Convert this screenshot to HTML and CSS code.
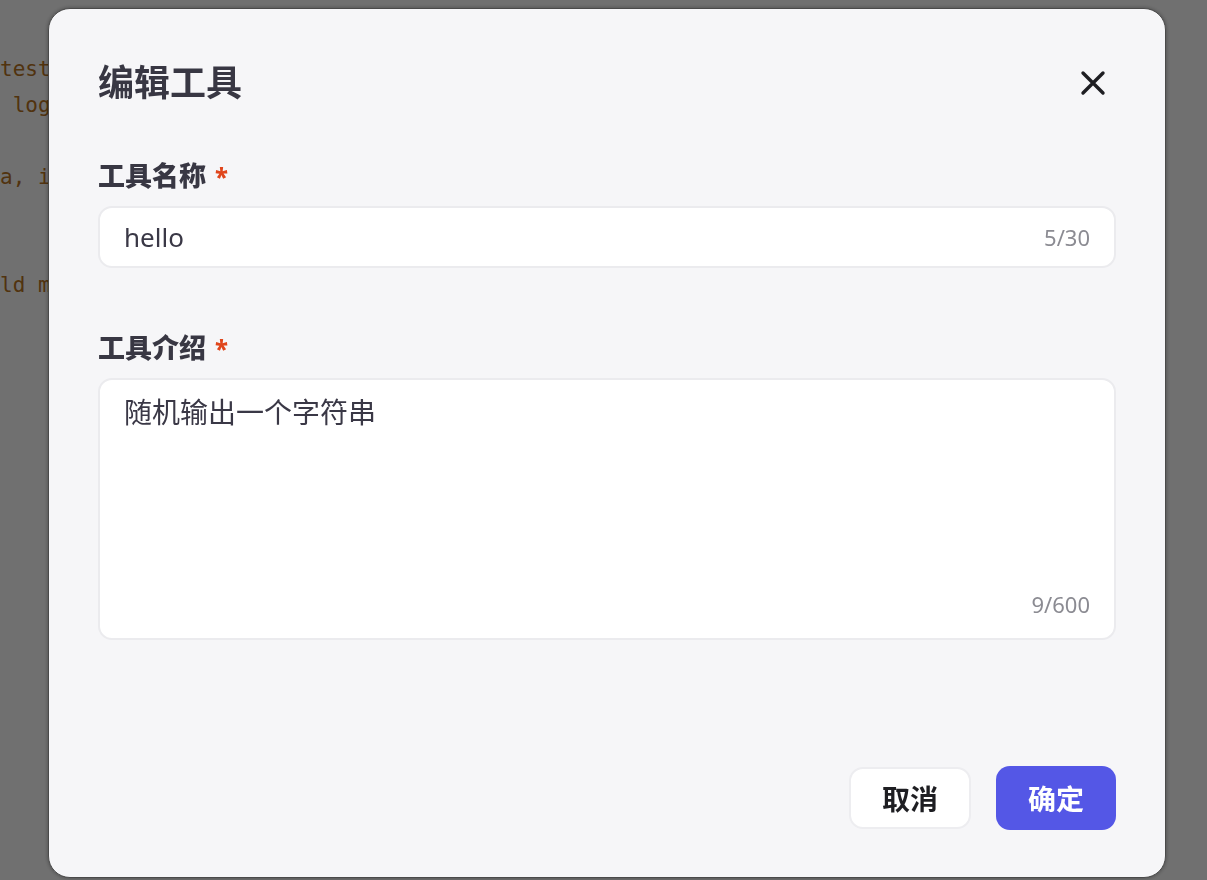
FILE: index.html
```html
<!DOCTYPE html>
<html>

<head>
    <title>编辑工具</title>
    <link rel="stylesheet" href="styles.css">
</head>

<body>
    <pre class="code">
test_tool = Tool()
 logger.info("start")

a, idx = 0, 1


ld message = build()
</pre>

    <div class="overlay">
        <div class="modal">
            <div class="modal-head">
                <h2 class="modal-title">编辑工具</h2>
                <button class="close-btn" aria-label="close">
                    <svg width="26" height="26" viewBox="0 0 26 26">
                        <path d="M3 3 L23 23 M23 3 L3 23" stroke="#1e1e22" stroke-width="3.4" stroke-linecap="round" fill="none" />
                    </svg>
                </button>
            </div>

            <div class="field">
                <label class="field-label">工具名称 <span class="req">*</span></label>
                <div class="input-box">
                    <span class="input-text">hello</span>
                    <span class="count">5/30</span>
                </div>
            </div>

            <div class="field field-2">
                <label class="field-label">工具介绍 <span class="req">*</span></label>
                <div class="textarea-box">
                    <span class="input-text input-cjk">随机输出一个字符串</span>
                    <span class="count">9/600</span>
                </div>
            </div>

            <div class="modal-foot">
                <button class="btn btn-cancel">取消</button>
                <button class="btn btn-ok">确定</button>
            </div>
        </div>
    </div>
</body>

</html>
```

FILE: styles.css
```css
html, body {
    margin: 0;
    padding: 0;
    background: #ffffff;
    height: 100%;
    overflow: hidden;
}

.code {
    margin: 0;
    padding-top: 51px;
    font-family: "DejaVu Sans Mono", "Liberation Mono", monospace;
    font-size: 21px;
    line-height: 36px;
    color: #b87424;
}

.overlay {
    position: fixed;
    inset: 0;
    background: rgba(0, 0, 0, 0.56);
}

.modal {
    position: absolute;
    left: 48px;
    top: 8px;
    width: 1118px;
    height: 870px;
    box-sizing: border-box;
    padding: 50px 49px 0 49px;
    background: #f6f6f8;
    border: 1px solid #4a4a4a;
    border-radius: 22px;
    box-shadow: 0 0 4px rgba(0, 0, 0, 0.35);
    font-family: "Noto Sans", "Noto Sans CJK SC", sans-serif;
    color: #383743;
    display: flex;
    flex-direction: column;
}

.modal-head {
    display: flex;
    justify-content: space-between;
    align-items: center;
    height: 48px;
}

.modal-title {
    margin: 0;
    font-size: 36px;
    line-height: 48px;
    font-weight: 700;
}

.close-btn {
    border: none;
    background: none;
    padding: 0;
    margin-right: 10px;
    width: 26px;
    height: 26px;
    cursor: pointer;
}

.field {
    margin-top: 49px;
}

.field-2 {
    margin-top: 60px;
}

.field-label {
    display: block;
    font-size: 27px;
    line-height: 40px;
    font-weight: 800;
    margin-bottom: 9px;
}

.req {
    color: #e0461c;
    font-size: 24px;
    margin-left: 2px;
}

.input-box,
.textarea-box {
    background: #ffffff;
    border: 2px solid #ebebee;
    border-radius: 14px;
    box-sizing: border-box;
    padding: 0 24px;
    display: flex;
}

.input-box {
    height: 62px;
    align-items: center;
    justify-content: space-between;
}

.textarea-box {
    height: 262px;
    flex-direction: column;
    justify-content: space-between;
    padding-top: 12px;
    padding-bottom: 19px;
}

.input-text {
    font-size: 26px;
    line-height: 36px;
    color: #3a3846;
}

.input-cjk {
    font-size: 28px;
    line-height: 40px;
}

.count {
    font-size: 22px;
    line-height: 30px;
    color: #8b8b92;
}

.textarea-box .count {
    align-self: flex-end;
}

.modal-foot {
    margin-top: 127px;
    display: flex;
    justify-content: flex-end;
    gap: 25px;
}

.btn {
    height: 62px;
    border-radius: 14px;
    font-family: "Noto Sans", "Noto Sans CJK SC", sans-serif;
    font-size: 28px;
    font-weight: 700;
    padding: 0;
    cursor: pointer;
}

.btn-cancel {
    width: 122px;
    background: #ffffff;
    border: 2px solid #ededf0;
    color: #1e1e22;
}

.btn-ok {
    width: 120px;
    height: 64px;
    margin-top: -1px;
    background: #5457e6;
    border: none;
    color: #ffffff;
}
```
